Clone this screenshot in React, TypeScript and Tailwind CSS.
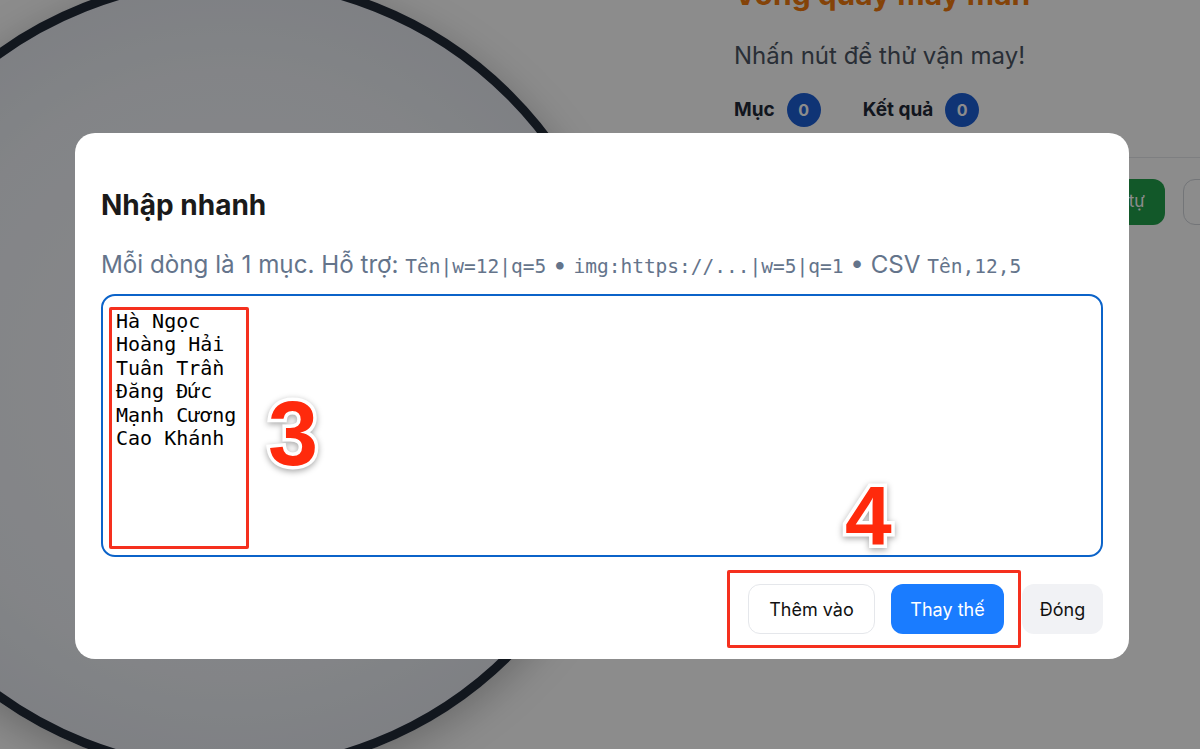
import React from 'react';

const names = ['Hà Ngọc', 'Hoàng Hải', 'Tuân Trần', 'Đăng Đức', 'Mạnh Cương', 'Cao Khánh'];

const mono = "font-['DejaVu_Sans_Mono',monospace]";

export default function App() {
  return (
    <div className="relative w-[1200px] h-[749px] overflow-hidden bg-white font-['Inter','Noto_Sans',sans-serif]">
      {/* Page under the dialog */}
      <div className="flex">
        <div className="shrink-0 ml-[-170px] mt-[-25px] w-[800px] h-[800px] rounded-full border-[9px] border-[#222a38] bg-[radial-gradient(circle,#fafbfd_0%,#eef1f6_55%,#d9dde6_100%)] shadow-[0_10px_40px_rgba(0,0,0,0.25)]"></div>
        <div className="ml-[104px] flex-1 flex flex-col">
          <h1 className="mt-[-24px] text-[30px] leading-[36px] font-bold text-[#f07a10]">Vòng quay may mắn</h1>
          <p className="mt-[28px] text-[24px] leading-[32px] text-[#4b5563]">Nhấn nút để thử vận may!</p>
          <div className="mt-[21px] flex items-center">
            <span className="text-[19px] font-bold text-[#1f2937]">Mục</span>
            <span className="ml-3 w-[34px] h-[34px] rounded-full bg-[#1d5fd6] text-white text-[16px] font-bold flex items-center justify-center">0</span>
            <span className="ml-[42px] text-[19px] font-bold text-[#1f2937]">Kết quả</span>
            <span className="ml-3 w-[34px] h-[34px] rounded-full bg-[#1d5fd6] text-white text-[16px] font-bold flex items-center justify-center">0</span>
          </div>
          <div className="mt-[30px] ml-[-120px] border-t border-[#e5e7eb]"></div>
          <div className="mt-[21px] flex gap-[18px] ml-[272px]">
            <button className="shrink-0 h-[46px] px-5 rounded-xl bg-[#22a04b] text-white text-[17px] whitespace-nowrap">Xáo trộn thứ tự</button>
            <button className="shrink-0 h-[46px] w-[80px] rounded-xl border border-[#d1d5db] bg-white text-[17px] text-[#111827]"></button>
          </div>
        </div>
      </div>

      {/* Overlay + dialog */}
      <div className="absolute inset-0 bg-black/45">
        <div className="ml-[75px] mt-[133px] w-[1054px] rounded-[20px] bg-white px-[26px] pt-[55px] pb-[25px]">
          <h2 className="text-[28px] leading-[34px] font-bold text-[#1a1a1a]">Nhập nhanh</h2>
          <p className="mt-[28px] h-[30px] whitespace-nowrap text-[24.2px] leading-[30px] text-[#64748b]">
            Mỗi dòng là 1 mục. Hỗ trợ: <span className={`${mono} text-[19.5px] leading-none`}>Tên|w=12|q=5</span> • <span className={`${mono} text-[19.5px] leading-none`}>img:https://...|w=5|q=1</span> • CSV <span className={`${mono} text-[19.5px] leading-none`}>Tên,12,5</span>
          </p>
          <div className="relative mt-[14px]">
            <textarea
              readOnly
              value={names.join('\n')}
              className={`block w-full h-[263px] resize-none rounded-[14px] border-2 border-[#0b63c9] pl-[13px] pt-[14px] outline-none text-[20px] leading-[23.4px] text-black ${mono}`}
            />
            <div className="absolute left-[8px] top-[13px] w-[140px] h-[242px] border-[3px] border-[#f5301e] rounded-[2px] pointer-events-none"></div>
            <span className="absolute left-[167px] top-[95px] text-[90px] leading-none font-bold text-[#ff2a0c] font-['Liberation_Sans',sans-serif] [-webkit-text-stroke:7px_white] [paint-order:stroke_fill] drop-shadow-[0_2px_3px_rgba(0,0,0,0.35)]">3</span>
            <span className="absolute left-[744px] top-[180px] text-[84px] leading-none font-bold text-[#ff2a0c] font-['Liberation_Sans',sans-serif] [-webkit-text-stroke:7px_white] [paint-order:stroke_fill] drop-shadow-[0_2px_3px_rgba(0,0,0,0.35)]">4</span>
          </div>
          <div className="relative mt-[27px] flex justify-end">
            <div className="absolute right-[82px] top-[-14px] w-[294px] h-[78px] border-[3px] border-[#f5301e] rounded-[2px] pointer-events-none"></div>
            <button className="h-[50px] w-[127px] rounded-xl border border-[#e5e7eb] bg-white text-[18px] text-[#111]">Thêm vào</button>
            <button className="ml-4 h-[50px] w-[113px] rounded-xl bg-[#1a7cff] text-[18px] text-white">Thay thế</button>
            <button className="ml-[18px] h-[50px] w-[81px] rounded-xl bg-[#f1f2f5] text-[18px] text-[#111]">Đóng</button>
          </div>
        </div>
      </div>
    </div>
  );
}
